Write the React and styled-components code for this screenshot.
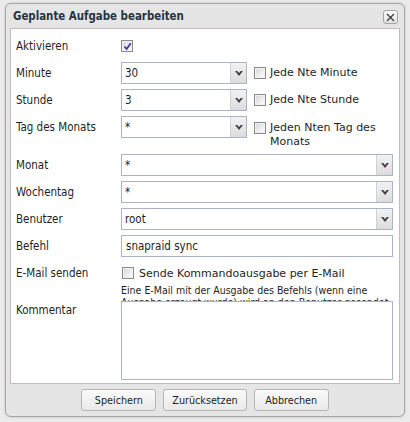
import React from "react";
import styled, { createGlobalStyle } from "styled-components";

const Global = createGlobalStyle`
  html, body { margin: 0; padding: 0; background: #ebebeb; }
  body { font-family: "DejaVu Sans Condensed", "DejaVu Sans", sans-serif; font-stretch: condensed; color: #1e1e1e; }
`;

const Page = styled.div`
  padding: 3px 5px 5px 5px;
`;

const Dialog = styled.div`
  width: 400px;
  box-sizing: border-box;
  background: #e5e5e5;
  border: 1px solid #a6a6a6;
  border-radius: 6px;
  box-shadow: 0 0 3px rgba(0, 0, 0, 0.18);
  display: flex;
  flex-direction: column;
`;

const TitleBar = styled.div`
  height: 24px;
  display: flex;
  align-items: center;
  justify-content: space-between;
  padding: 0 6px 0 7px;
`;

const Title = styled.div`
  font-family: "DejaVu Sans Condensed", "DejaVu Sans", sans-serif;
  font-stretch: condensed;
  font-weight: bold;
  font-size: 11.4px;
  color: #253444;
`;

const CloseButton = styled.button`
  width: 15px;
  height: 14px;
  margin-top: 2px;
  padding: 0;
  box-sizing: border-box;
  border: 1px solid #a4a4a4;
  border-radius: 3px;
  background: linear-gradient(#fbfbfb, #e2e2e2);
  display: flex;
  align-items: center;
  justify-content: center;
`;

const Panel = styled.div`
  margin: 0 4px;
  background: #fff;
  border: 1px solid #c6b9c2;
  padding: 6px 6px 3px 5px;
`;

const FormGrid = styled.div`
  display: grid;
  grid-template-columns: 105px minmax(0, 1fr);
  row-gap: 5px;
  align-items: start;
`;

const Label = styled.div`
  height: ${(p) => (p.$top ? "17px" : "22px")};
  display: flex;
  align-items: center;
  font-size: 11.5px;
  color: #1e1e1e;
`;

const Cell = styled.div`
  display: flex;
  align-items: ${(p) => (p.$align || "center")};
  min-height: 22px;
  gap: 7px;
`;

const SelectBox = styled.div`
  width: ${(p) => (p.$small ? "126px" : "100%")};
  flex: ${(p) => (p.$small ? "none" : "1")};
  height: 22px;
  box-sizing: border-box;
  border: 1px solid #adb2c9;
  background: #fff;
  display: flex;
`;

const SelectValue = styled.div`
  flex: 1;
  display: flex;
  align-items: center;
  padding-left: 3px;
  font-size: 11.5px;
  color: #1e1e1e;
`;

const ArrowButton = styled.div`
  width: 15px;
  border-left: 1px solid #d0d0dc;
  background: linear-gradient(#f2f2f2, #dcdcdc);
  display: flex;
  align-items: center;
  justify-content: center;
`;

const TextInput = styled.div`
  flex: 1;
  height: 22px;
  box-sizing: border-box;
  border: 1px solid #adb2c9;
  display: flex;
  align-items: center;
  padding-left: 4px;
  font-size: 11.5px;
`;

const CheckGroup = styled.div`
  display: flex;
  align-items: flex-start;
  gap: 4px;
  padding-top: ${(p) => (p.$pt || "0")};
  font-family: "DejaVu Sans", sans-serif;
  font-stretch: normal;
  font-size: 11px;
  line-height: 14px;
  color: #1e1e1e;
`;

const Box = styled.span`
  flex: none;
  width: 12px;
  height: 12px;
  margin-top: ${(p) => (p.$mt || "0")};
  box-sizing: border-box;
  border: 1px solid #8a8a8a;
  background: linear-gradient(135deg, #d4d4d4, #f4f4f4 70%, #ffffff);
  box-shadow: inset 0 0 0 1px #f2f2f2;
  display: flex;
  align-items: center;
  justify-content: center;
`;

const MailCell = styled.div`
  height: 34px;
  display: flex;
  flex-direction: column;
`;

const MailLine = styled.div`
  flex: none;
  height: 22px;
  display: flex;
  align-items: center;
  gap: 5px;
  padding-left: 1px;
  font-family: "DejaVu Sans", sans-serif;
  font-stretch: normal;
  font-size: 11px;
`;

const Hint = styled.div`
  flex: none;
  font-size: 10.5px;
  line-height: 12px;
  color: #1e1e1e;
  width: 274px;
`;

const TextArea = styled.textarea`
  display: block;
  width: 100%;
  height: 79px;
  box-sizing: border-box;
  border: 1px solid #adb2c9;
  resize: none;
  margin: 0;
  background: #fff;
`;

const ButtonBar = styled.div`
  display: flex;
  justify-content: center;
  gap: 7px;
  padding: 5px 0 5px;
`;

const Button = styled.button`
  min-width: 75px;
  height: 22px;
  padding: 0 8px;
  box-sizing: border-box;
  border: 1px solid #b6b6b6;
  border-radius: 3px;
  background: linear-gradient(#fafafa, #e9e9e9);
  font-family: "DejaVu Sans Condensed", "DejaVu Sans", sans-serif;
  font-stretch: condensed;
  font-size: 10.7px;
  color: #1e1e1e;
`;

const Chevron = () => (
  <svg width="8" height="5" viewBox="0 0 8 5">
    <polygon points="0,0 2.2,0 4,2 5.8,0 8,0 4,5" fill="#4a3a48" />
  </svg>
);

const Select = ({ value, small }) => (
  <SelectBox $small={small}>
    <SelectValue>{value}</SelectValue>
    <ArrowButton>
      <Chevron />
    </ArrowButton>
  </SelectBox>
);

const Check = ({ checked, mt }) => (
  <Box $mt={mt}>
    {checked && (
      <svg width="9" height="9" viewBox="0 0 9 9">
        <path d="M1.5 4.5 L3.6 7 L7.8 1.2" stroke="#3b3ba6" strokeWidth="1.8" fill="none" />
      </svg>
    )}
  </Box>
);

export default function App() {
  return (
    <>
      <Global />
      <Page>
        <Dialog>
          <TitleBar>
            <Title>Geplante Aufgabe bearbeiten</Title>
            <CloseButton aria-label="close">
              <svg width="9" height="9" viewBox="0 0 9 9">
                <path d="M1 1 L8 8 M8 1 L1 8" stroke="#3a3a3a" strokeWidth="1.3" />
              </svg>
            </CloseButton>
          </TitleBar>
          <Panel>
            <FormGrid>
              <Label>Aktivieren</Label>
              <Cell>
                <Check checked />
              </Cell>

              <Label>Minute</Label>
              <Cell>
                <Select value="30" small />
                <CheckGroup>
                  <Check mt="1px" />
                  <span>Jede Nte Minute</span>
                </CheckGroup>
              </Cell>

              <Label>Stunde</Label>
              <Cell>
                <Select value="3" small />
                <CheckGroup>
                  <Check mt="1px" />
                  <span>Jede Nte Stunde</span>
                </CheckGroup>
              </Cell>

              <Label>Tag des Monats</Label>
              <Cell $align="flex-start">
                <Select value="*" small />
                <CheckGroup $pt="5px">
                  <Check mt="1px" />
                  <span>Jeden Nten Tag des Monats</span>
                </CheckGroup>
              </Cell>

              <Label>Monat</Label>
              <Cell>
                <Select value="*" />
              </Cell>

              <Label>Wochentag</Label>
              <Cell>
                <Select value="*" />
              </Cell>

              <Label>Benutzer</Label>
              <Cell>
                <Select value="root" />
              </Cell>

              <Label>Befehl</Label>
              <Cell>
                <TextInput>snapraid sync</TextInput>
              </Cell>

              <Label>E-Mail senden</Label>
              <MailCell>
                <MailLine>
                  <Check />
                  <span>Sende Kommandoausgabe per E-Mail</span>
                </MailLine>
                <Hint>
                  Eine E-Mail mit der Ausgabe des Befehls (wenn eine Ausgabe erzeugt wurde) wird an den Benutzer gesendet
                </Hint>
              </MailCell>

              <Label $top>Kommentar</Label>
              <Cell>
                <TextArea />
              </Cell>
            </FormGrid>
          </Panel>
          <ButtonBar>
            <Button>Speichern</Button>
            <Button>Zurücksetzen</Button>
            <Button>Abbrechen</Button>
          </ButtonBar>
        </Dialog>
      </Page>
    </>
  );
}
